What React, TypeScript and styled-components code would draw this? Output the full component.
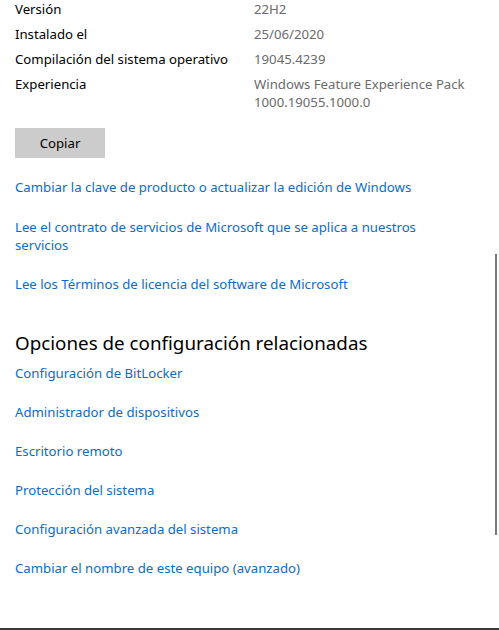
import React from "react";
import styled, { createGlobalStyle } from "styled-components";

const Global = createGlobalStyle`
  html, body { margin: 0; padding: 0; background: #ffffff; }
  body { font-family: "Noto Sans", "Open Sans", sans-serif; }
`;

const Window = styled.div`
  position: relative;
  box-sizing: border-box;
  width: 499px;
  height: 630px;
  border-bottom: 2px solid #3a3a3a;
  padding-left: 15px;
  overflow: hidden;
  font-size: 13.2px;
  line-height: 18px;
  color: #000;
`;

const Specs = styled.div`
  display: grid;
  grid-template-columns: 239px 1fr;
  row-gap: 7px;
`;

const Label = styled.div`
  color: #000;
`;

const Value = styled.div`
  color: #6b6b6b;
`;

const CopyButton = styled.button`
  display: block;
  margin-top: 17px;
  width: 90px;
  height: 30px;
  border: none;
  background: #cccccc;
  color: #000;
  font-family: inherit;
  font-size: 13.2px;
  padding: 0;
`;

const LinkList = styled.div<{ $top: number; $firstExtra?: number }>`
  display: flex;
  flex-direction: column;
  gap: 21px;
  margin-top: ${(p) => p.$top}px;
  & > :first-child {
    margin-bottom: ${(p) => p.$firstExtra ?? 0}px;
  }
`;

const Link = styled.a`
  color: #0b6cc9;
  text-decoration: none;
  max-width: 440px;
`;

const Heading = styled.h2`
  margin: 37px 0 0 0;
  font-size: 18.8px;
  line-height: 26px;
  font-weight: 400;
  color: #000;
`;

const ScrollThumb = styled.div`
  position: absolute;
  right: 2px;
  top: 254px;
  width: 2px;
  height: 281px;
  background: #7a7a7a;
`;

const specs: [string, string][] = [
  ["Versión", "22H2"],
  ["Instalado el", "25/06/2020"],
  ["Compilación del sistema operativo", "19045.4239"],
  ["Experiencia", "Windows Feature Experience Pack 1000.19055.1000.0"],
];

const topLinks = [
  "Cambiar la clave de producto o actualizar la edición de Windows",
  "Lee el contrato de servicios de Microsoft que se aplica a nuestros servicios",
  "Lee los Términos de licencia del software de Microsoft",
];

const related = [
  "Configuración de BitLocker",
  "Administrador de dispositivos",
  "Escritorio remoto",
  "Protección del sistema",
  "Configuración avanzada del sistema",
  "Cambiar el nombre de este equipo (avanzado)",
];

export default function App() {
  return (
    <>
      <Global />
      <Window>
        <Specs>
          {specs.map(([l, v]) => (
            <React.Fragment key={l}>
              <Label>{l}</Label>
              <Value>
                {v.startsWith("Windows") ? (
                  <>
                    Windows Feature Experience Pack
                    <br />
                    1000.19055.1000.0
                  </>
                ) : (
                  v
                )}
              </Value>
            </React.Fragment>
          ))}
        </Specs>
        <CopyButton>Copiar</CopyButton>
        <LinkList $top={20} $firstExtra={1}>
          {topLinks.map((t) => (
            <Link key={t} href="#">
              {t}
            </Link>
          ))}
        </LinkList>
        <Heading>Opciones de configuración relacionadas</Heading>
        <LinkList $top={8}>
          {related.map((t) => (
            <Link key={t} href="#">
              {t}
            </Link>
          ))}
        </LinkList>
        <ScrollThumb />
      </Window>
    </>
  );
}
